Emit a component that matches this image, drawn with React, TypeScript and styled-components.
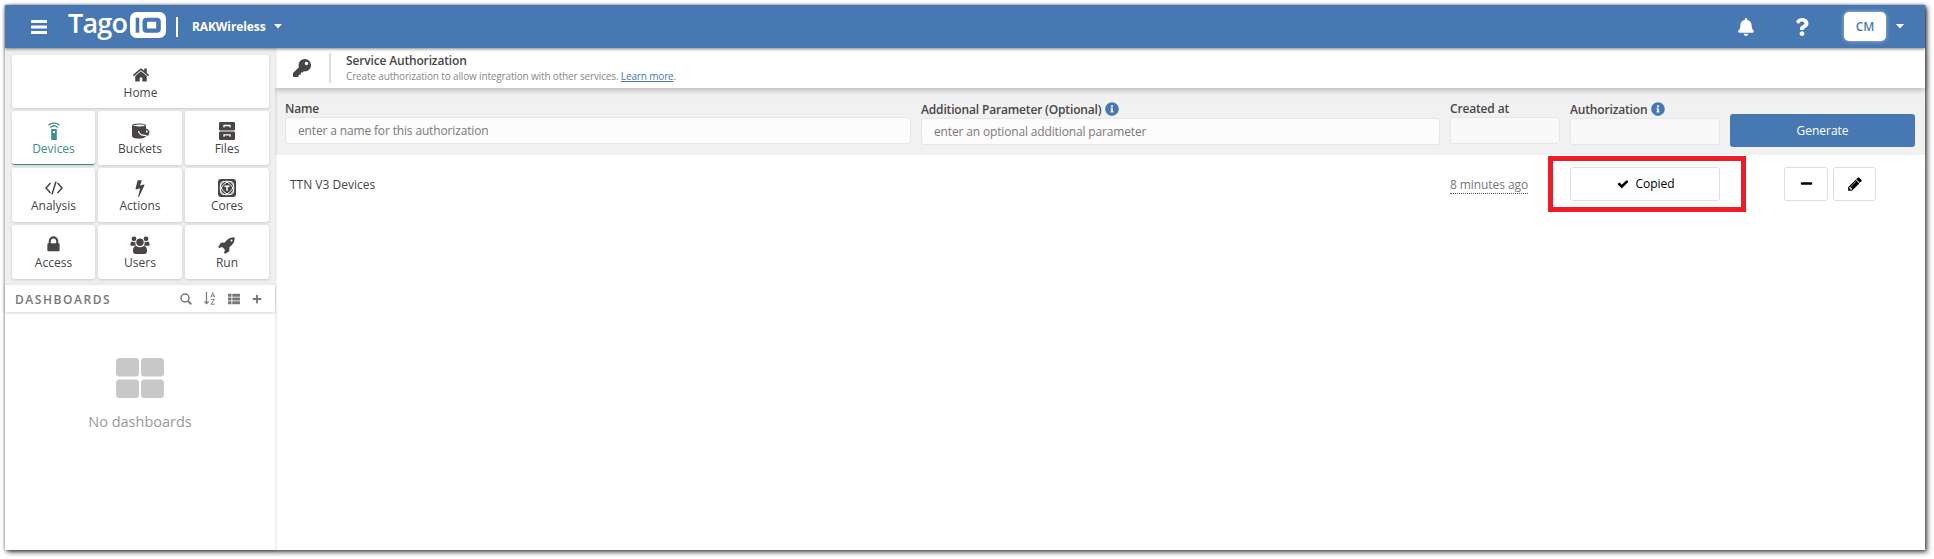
import React from "react";
import styled, { createGlobalStyle, css } from "styled-components";
import { FaBell, FaInfoCircle, FaKey, FaMinus, FaPlus, FaQuestion, FaThList } from "react-icons/fa";

const GlobalStyle = createGlobalStyle`
  * { box-sizing: border-box; }
  body { margin: 0; background: #fff; font-family: "Open Sans", "Noto Sans", sans-serif; font-size: 12px; color: #4a4545; }
  button, input { font: inherit; margin: 0; }
  svg { flex: none; display: block; }
`;

const Page = styled.div`
  padding: 5px 9px 9px 5px;
  height: 559px;
  overflow: hidden;
`;
const Window = styled.div`
  height: 545px;
  display: flex;
  flex-direction: column;
  background: #fff;
  box-shadow: 2px 2px 5px rgba(0, 0, 0, 0.75), 0 0 3px rgba(0, 0, 0, 0.2);
`;

const TopBar = styled.header`
  flex: 0 0 43px;
  position: relative;
  z-index: 2;
  display: flex;
  align-items: center;
  padding: 0 21px 0 26px;
  background: #4878b2;
  color: #fff;
  box-shadow: 0 1px 3px rgba(0, 0, 0, 0.5);
`;
const Logo = styled.div`
  display: flex;
  align-items: center;
  margin: 0 10px 3px 21px;
`;
const LogoText = styled.span`
  font: 600 27px/30px "Open Sans", sans-serif;
  letter-spacing: -0.8px;
  width: 62px;
  margin-top: -5px;
`;
const Divider = styled.span<{ $h: number; $color: string }>`
  flex: none;
  width: 2px;
  height: ${(p) => p.$h}px;
  background: ${(p) => p.$color};
`;
const Account = styled.div`
  display: flex;
  align-items: center;
  gap: 8px;
  margin-left: 14px;
  font-weight: 700;
  font-size: 12px;
  letter-spacing: -0.1px;
`;
const TopActions = styled.div`
  display: flex;
  align-items: center;
  gap: 38px;
  margin-left: auto;
`;
const Profile = styled.div`
  display: flex;
  align-items: center;
  gap: 10px;
  margin-left: -5px;
`;
const Avatar = styled.div`
  width: 42px;
  height: 29px;
  margin-bottom: 1px;
  display: grid;
  place-items: center;
  border-radius: 5px;
  background: #fff;
  color: #4878b2;
  font-weight: 600;
  font-size: 12px;
  box-shadow: 0 0 4px rgba(255, 255, 255, 0.5);
`;

const Body = styled.div`
  flex: 1;
  display: flex;
  min-height: 0;
`;
const Sidebar = styled.aside`
  flex: 0 0 270px;
  position: relative;
  z-index: 1;
  display: flex;
  flex-direction: column;
  box-shadow: 0 0 3px rgba(0, 0, 0, 0.22);
`;
const Tiles = styled.nav`
  display: grid;
  grid-template-columns: 83px 84px 84px;
  grid-template-rows: 53px repeat(3, 54px);
  gap: 3px;
  padding: 7px 6px 6px 7px;
  height: 237px;
  background: #efefef;
`;
const Tile = styled.a<{ $wide?: boolean; $active?: boolean }>`
  display: flex;
  flex-direction: column;
  align-items: center;
  padding-top: 9px;
  border-radius: 3px;
  background: #fff;
  color: #4a4545;
  box-shadow: 0 1px 3px rgba(0, 0, 0, 0.16);
  font-size: 12px;
  line-height: 16px;
  ${(p) => p.$wide && css`grid-column: 1 / -1;`}
  ${(p) => p.$active && css`color: #3d8e8b; border-bottom: 1px solid #3d8e8b;`}
`;
const TileIcon = styled.span`
  height: 21px;
  display: grid;
  place-items: center;
`;
const DashHeader = styled.div`
  display: flex;
  align-items: center;
  height: 27px;
  padding: 0 13px 0 10px;
  color: #777;
  box-shadow: 0 1px 3px rgba(0, 0, 0, 0.18);
`;
const DashTitle = styled.h2`
  margin: 2px auto 0 0;
  font-size: 12px;
  font-weight: 600;
  letter-spacing: 1.55px;
`;
const DashTools = styled.div`
  display: flex;
  align-items: center;
  gap: 12px;
`;
const Empty = styled.div`
  display: flex;
  flex-direction: column;
  align-items: center;
  padding-top: 46px;
  color: #999;
  font-size: 14.5px;
  line-height: 20px;
  gap: 14px;
`;

const Main = styled.main`
  flex: 1;
  min-width: 0;
  display: flex;
  flex-direction: column;
`;
const PageHead = styled.div`
  flex: 0 0 40px;
  position: relative;
  display: flex;
  align-items: center;
  padding-left: 18px;
  background: #fff;
  box-shadow: 0 2px 6px rgba(0, 0, 0, 0.25);
`;
const KeySlot = styled.span`
  width: 36px;
`;
const HeadText = styled.div`
  margin-left: 15px;
`;
const HeadTitle = styled.h1`
  margin: 0;
  font-size: 12px;
  font-weight: 600;
  line-height: 16px;
  letter-spacing: -0.16px;
`;
const HeadNote = styled.p`
  margin: 0;
  font-size: 10px;
  line-height: 14px;
  letter-spacing: -0.15px;
  color: #888;
`;
const Link = styled.a`
  color: #4878b2;
  text-decoration: underline;
`;

const columns = css`
  display: grid;
  grid-template-columns: 1fr 519px 110px 150px 185px;
  column-gap: 10px;
  padding: 0 10px;
`;
const Form = styled.form`
  ${columns}
  height: 67px;
  background: #f1f1f1;
`;
const Field = styled.label`
  display: flex;
  flex-direction: column;
  padding-top: 11px;
`;
const FieldLabel = styled.span<{ $info?: boolean }>`
  display: flex;
  align-items: center;
  gap: 4px;
  height: ${(p) => (p.$info ? 19 : 18)}px;
  padding-top: ${(p) => (p.$info ? 1 : 0)}px;
  font-weight: 600;
  font-size: 12px;
  letter-spacing: -0.16px;
`;
const Input = styled.input`
  width: 100%;
  height: 27px;
  padding: 0 12px;
  border: 1px solid #e6e6e6;
  border-radius: 3px;
  background: #fcfcfc;
  font-size: 12px;
  letter-spacing: -0.15px;
  &::placeholder { color: #7d7878; opacity: 1; }
  &:disabled { background: #f9f9f9; }
`;
const GenerateButton = styled.button`
  height: 33px;
  margin-top: 26px;
  border: 0;
  border-radius: 3px;
  background: #4878b2;
  color: #fff;
  font-size: 12px;
  font-weight: 500;
`;
const Row = styled.div`
  ${columns}
  height: 58px;
  align-items: center;
`;
const RowName = styled.span`
  padding-left: 5px;
`;
const Ago = styled.span`
  justify-self: start;
  margin-top: 2px;
  line-height: 16px;
  letter-spacing: -0.08px;
  color: #777;
  border-bottom: 1px dotted #555;
  white-space: nowrap;
`;
const CopyCell = styled.div`
  position: relative;
`;
const Highlight = styled.div`
  position: absolute;
  inset: -11px -26px -11px -22px;
  border: 5px solid #ee1c24;
  pointer-events: none;
`;
const OutlineButton = styled.button<{ $w: number }>`
  display: flex;
  align-items: center;
  justify-content: center;
  gap: 6px;
  width: ${(p) => p.$w}px;
  height: 34px;
  padding: 0 0 1px;
  border: 1px solid #dedede;
  border-radius: 3px;
  background: #fff;
  color: #000;
`;
const CopiedButton = styled(OutlineButton)`
  padding-left: 2px;
`;
const RowActions = styled.div`
  display: flex;
  gap: 5px;
  padding-left: 54px;
`;

const Glyph = ({ d, size }: { d: string; size: number }) => (
  <svg width={size} height={size} viewBox="0 0 1792 1792" fill="currentColor">
    <path d={d} />
  </svg>
);
const glyphs = {
  home: "M1472 992v480q0 26-19 45t-45 19h-384v-384h-256v384h-384q-26 0-45-19t-19-45v-480q0-1 .5-3t.5-3l575-474 575 474q1 2 1 6zm223-69l-62 74q-8 9-21 11h-3q-13 0-21-7l-692-577-692 577q-12 8-24 7-13-2-21-11l-62-74q-8-10-7-23.500t11-21.500l719-599q32-26 76-26t76 26l244 204v-195q0-14 9-23t23-9h192q14 0 23 9t9 23v408l219 182q10 8 11 21.500t-7 23.500z",
  bolt: "M1333 566q18 20 7 44l-540 1157q-13 25-42 25-4 0-14-2-17-5-25.500-19t-4.500-30l197-808-406 101q-4 1-12 1-18 0-31-11-18-15-13-39l201-825q4-14 16-23t28-9h328q19 0 32 12.500t13 29.500q0 8-5 18l-171 463 396-98q8-2 12-2 19 0 34 15z",
  lock: "M640 768h512v-192q0-106-75-181t-181-75-181 75-75 181v192zm832 96v576q0 40-28 68t-68 28h-960q-40 0-68-28t-28-68v-576q0-40 28-68t68-28h32v-192q0-184 132-316t316-132 316 132 132 316v192h32q40 0 68 28t28 68z",
  rocket: "M1440 448q0-40-28-68t-68-28-68 28-28 68 28 68 68 28 68-28 28-68zm224-288q0 249-75.500 430.500t-253.500 360.500q-81 80-195 176l-20 379q-2 16-16 26l-384 224q-7 4-16 4-12 0-23-9l-64-64q-13-14-8-32l85-276-281-281-276 85q-3 1-9 1-14 0-23-9l-64-64q-17-19-5-39l224-384q10-14 26-16l379-20q96-114 176-195 188-187 358-258t431-71q14 0 24 9.500t10 22.500z",
  check: "M1671 566q0 40-28 68l-724 724-136 136q-28 28-68 28t-68-28l-136-136-362-362q-28-28-28-68t28-68l136-136q28-28 68-28t68 28l294 295 656-657q28-28 68-28t68 28l136 136q28 28 28 68z",
  pencil: "M491 1536l91-91-235-235-91 91v107h128v128h107zM1014 608q0-22-22-22-10 0-17 7l-542 542q-7 7-7 17 0 22 22 22 10 0 17-7l542-542q7-7 7-17zM960 416l416 416-832 832h-416v-416zM1643 512q0 53-37 90l-166 166-416-416 166-165q36-38 90-38 53 0 91 38l235 234q37 39 37 91z",
};

const MenuIcon = () => (
  <svg width="16" height="14" viewBox="0 0 16 14" fill="currentColor">
    <rect width="16" height="3" rx=".5" />
    <rect y="5.500" width="16" height="3" rx=".5" />
    <rect y="11" width="16" height="3" rx=".5" />
  </svg>
);
const Caret = () => (
  <svg width="8" height="5" viewBox="0 0 8 5" fill="currentColor">
    <path d="M0 0h8L4 4.500z" />
  </svg>
);
const DeviceIcon = () => (
  <svg width="14" height="18" viewBox="0 0 14 18" fill="none" stroke="currentColor">
    <path d="M1.500 3.200C4.500.3 9.500.3 12.500 3.200M3.300 5.400c2.200-2 5.200-2 7.400 0" strokeWidth="1.300" />
    <path fillRule="evenodd" d="M4.200 7h5.600v11H4.200zM6 9h2v2H6z" fill="currentColor" stroke="none" />
  </svg>
);
const BucketIcon = () => (
  <svg width="19" height="16" viewBox="0 0 19 16">
    <path d="M1 2.500V13c0 3.500 13 3.500 14 0V2.500z" fill="currentColor" />
    <ellipse cx="8" cy="2.500" rx="6.400" ry="1.500" fill="#fff" stroke="currentColor" strokeWidth="1.200" />
    <path d="M15 6.200c3 1 3.400 3.800 1.500 4.800" fill="none" stroke="currentColor" strokeWidth="1.600" />
    <path d="M7.500 8c.6 3.400 3.600 5 8 4.200" fill="none" stroke="#fff" strokeWidth="1.300" />
    <circle cx="16.300" cy="11" r="1.700" fill="currentColor" />
  </svg>
);
const FilesIcon = () => (
  <svg width="16" height="18" viewBox="0 0 16 18">
    <rect width="16" height="8.400" rx="1.200" fill="currentColor" />
    <rect y="9.600" width="16" height="8.400" rx="1.200" fill="currentColor" />
    <path d="M5 5.500V3.500h6v2M5 14.800v-2h6v2" fill="none" stroke="#fff" strokeWidth="1.300" />
  </svg>
);
const CodeIcon = () => (
  <svg width="18" height="14" viewBox="0 0 18 14" fill="none" stroke="currentColor" strokeWidth="1.500">
    <path d="M5.500 2 1 7l4.500 5M12.500 2 17 7l-4.500 5M11 .5l-4 13" />
  </svg>
);
const CoresIcon = () => (
  <svg width="18" height="18" viewBox="0 0 18 18" fill="none">
    <rect width="18" height="18" rx="3" fill="currentColor" />
    <g stroke="#fff" strokeWidth=".9">
      <circle cx="9" cy="9" r="6.900" />
      <ellipse cx="9" cy="9" rx="8" ry="4.800" transform="rotate(45 9 9)" />
      <ellipse cx="9" cy="9" rx="8" ry="4.800" transform="rotate(-45 9 9)" />
    </g>
    <circle cx="9" cy="9" r="3.800" fill="currentColor" />
    <path d="M6.500 7.200h5M9 7.200v4.500" stroke="#fff" strokeWidth="1.500" />
  </svg>
);
const UsersIcon = () => (
  <svg width="20" height="18" viewBox="0 0 20 18" fill="currentColor">
    <circle cx="4" cy="2.800" r="2.400" />
    <circle cx="16" cy="2.800" r="2.400" />
    <path d="M.3 9.500C.3 7 1 5.500 2.300 5.500c1 .8 2.300.8 3.200.2-.5 1.800 0 3 .8 4H1.500c-.8 0-1.200-.3-1.200-.9zM19.700 9.500c0-2.500-.7-4-2-4-1 .8-2.300.8-3.200.2.500 1.800 0 3-.8 4h4.800c.8 0 1.200-.3 1.200-.9z" />
    <circle cx="10" cy="6.300" r="3.700" />
    <path d="M3 15c0-3.200 1.200-5 3.300-5 2.200 1.700 5.200 1.700 7.400 0C15.800 10 17 11.800 17 15c0 2-1 3-2.800 3H5.800C4 18 3 17 3 15z" />
  </svg>
);
const SearchIcon = () => (
  <svg width="12" height="12" viewBox="0 0 12 12" fill="none" stroke="currentColor">
    <circle cx="5" cy="5" r="4" strokeWidth="1.500" />
    <path d="m8 8 3.300 3.300" strokeWidth="1.900" />
  </svg>
);
const SortIcon = () => (
  <svg width="12" height="13" viewBox="0 0 12 13" fill="none" stroke="currentColor">
    <path d="M2.500 0v11.500M.4 9.300l2.100 2.300 2.100-2.300" strokeWidth="1.200" />
    <path d="M6.700 5.500 8.800.6l2.100 4.900M7.400 4h2.800M7 7.500h3.600L7 12.200h3.800" strokeWidth=".9" />
  </svg>
);
const GridIcon = () => (
  <svg width="48" height="40" viewBox="0 0 48 40" fill="#c8c8c8">
    <rect width="23" height="18.500" rx="3.500" />
    <rect x="25" width="23" height="18.500" rx="3.500" />
    <rect y="21.500" width="23" height="18.500" rx="3.500" />
    <rect x="25" y="21.500" width="23" height="18.500" rx="3.500" />
  </svg>
);
const LogoBadge = () => (
  <svg width="36" height="26" viewBox="0 0 36 26">
    <rect width="36" height="26" rx="6.500" fill="#fff" />
    <rect x="5.700" y="5.700" width="3.600" height="15" fill="#4878b2" />
    <rect x="12.500" y="5.700" width="18.300" height="15" rx="4" fill="#4878b2" />
    <rect x="17" y="9.800" width="9.200" height="6.700" rx="1" fill="#fff" />
  </svg>
);

const tiles = [
  { label: "Home", icon: <Glyph d={glyphs.home} size={18} />, wide: true },
  { label: "Devices", icon: <DeviceIcon />, active: true },
  { label: "Buckets", icon: <BucketIcon /> },
  { label: "Files", icon: <FilesIcon /> },
  { label: "Analysis", icon: <CodeIcon /> },
  { label: "Actions", icon: <Glyph d={glyphs.bolt} size={18} /> },
  { label: "Cores", icon: <CoresIcon /> },
  { label: "Access", icon: <Glyph d={glyphs.lock} size={19} /> },
  { label: "Users", icon: <UsersIcon /> },
  { label: "Run", icon: <Glyph d={glyphs.rocket} size={18} /> },
];

export default function App() {
  return (
    <Page>
      <GlobalStyle />
      <Window>
        <TopBar>
          <MenuIcon />
          <Logo>
            <LogoText>Tago</LogoText>
            <LogoBadge />
          </Logo>
          <Divider $h={20} $color="#fff" />
          <Account>RAKWireless <Caret /></Account>
          <TopActions>
            <FaBell size={18} />
            <FaQuestion size={18} />
            <Profile>
              <Avatar>CM</Avatar>
              <Caret />
            </Profile>
          </TopActions>
        </TopBar>
        <Body>
          <Sidebar>
            <Tiles>
              {tiles.map((t) => (
                <Tile key={t.label} $wide={t.wide} $active={t.active}>
                  <TileIcon>{t.icon}</TileIcon>
                  {t.label}
                </Tile>
              ))}
            </Tiles>
            <DashHeader>
              <DashTitle>DASHBOARDS</DashTitle>
              <DashTools>
                <SearchIcon />
                <SortIcon />
                <FaThList size={12} />
                <FaPlus size={10} />
              </DashTools>
            </DashHeader>
            <Empty>
              <GridIcon />
              No dashboards
            </Empty>
          </Sidebar>
          <Main>
            <PageHead>
              <KeySlot><FaKey size={18} /></KeySlot>
              <Divider $h={30} $color="#ddd" />
              <HeadText>
                <HeadTitle>Service Authorization</HeadTitle>
                <HeadNote>
                  Create authorization to allow integration with other services. <Link>Learn more</Link>.
                </HeadNote>
              </HeadText>
            </PageHead>
            <Form>
              <Field>
                <FieldLabel>Name</FieldLabel>
                <Input placeholder="enter a name for this authorization" />
              </Field>
              <Field>
                <FieldLabel $info>Additional Parameter (Optional) <FaInfoCircle size={14} color="#4878b2" /></FieldLabel>
                <Input placeholder="enter an optional additional parameter" />
              </Field>
              <Field>
                <FieldLabel>Created at</FieldLabel>
                <Input disabled />
              </Field>
              <Field>
                <FieldLabel $info>Authorization <FaInfoCircle size={14} color="#4878b2" /></FieldLabel>
                <Input disabled />
              </Field>
              <GenerateButton type="button">Generate</GenerateButton>
            </Form>
            <Row>
              <RowName>TTN V3 Devices</RowName>
              <span />
              <Ago>8 minutes ago</Ago>
              <CopyCell>
                <CopiedButton $w={150}><Glyph d={glyphs.check} size={12} /> Copied</CopiedButton>
                <Highlight />
              </CopyCell>
              <RowActions>
                <OutlineButton $w={44}><FaMinus size={13} /></OutlineButton>
                <OutlineButton $w={43}><Glyph d={glyphs.pencil} size={16} /></OutlineButton>
              </RowActions>
            </Row>
          </Main>
        </Body>
      </Window>
    </Page>
  );
}
